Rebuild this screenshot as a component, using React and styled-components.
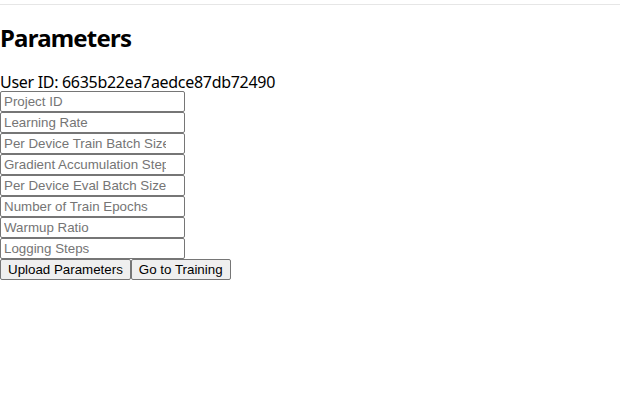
import React from "react";
import styled, { createGlobalStyle } from "styled-components";

const GlobalStyle = createGlobalStyle`
  body {
    margin: 0;
    font-family: "Noto Sans", "Open Sans", sans-serif;
    background: #fff;
    color: #000;
  }
`;

const TopRule = styled.hr`
  margin: 4px 0 0;
  border: none;
  border-top: 1px solid #e6e6e6;
`;

const Title = styled.h2`
  font-size: 24px;
  font-weight: 700;
  letter-spacing: -0.8px;
  margin: 19px 0 21px;
  line-height: 28px;
`;

const UserLine = styled.div`
  font-size: 16px;
  letter-spacing: -0.3px;
  line-height: 18px;
`;

const Field = styled.input`
  display: block;
  box-sizing: border-box;
  width: 185px;
  height: 21px;
  margin: 0;
  padding: 1px 3px;
  font-family: "Liberation Sans", Arial, sans-serif;
  font-size: 13.33px;
  border: 1px solid #767676;
  border-radius: 2px;
  color: #000;
  &::placeholder {
    color: #757575;
  }
`;

const Actions = styled.div`
  display: flex;
`;

const Button = styled.button`
  font-family: "Liberation Sans", Arial, sans-serif;
  font-size: 13.33px;
  height: 21px;
  padding: 1px 7px;
  background: #efefef;
  border: 1px solid #767676;
  border-radius: 2px;
  color: #000;
`;

const fields = [
  ["Project ID", "text"],
  ["Learning Rate", "number"],
  ["Per Device Train Batch Size", "number"],
  ["Gradient Accumulation Steps", "number"],
  ["Per Device Eval Batch Size", "number"],
  ["Number of Train Epochs", "number"],
  ["Warmup Ratio", "number"],
  ["Logging Steps", "number"],
];

export default function App() {
  return (
    <>
      <GlobalStyle />
      <TopRule />
      <Title>Parameters</Title>
      <UserLine>User ID: 6635b22ea7aedce87db72490</UserLine>
      {fields.map(([label, type]) => (
        <Field key={label} type={type} placeholder={label} />
      ))}
      <Actions>
        <Button>Upload Parameters</Button>
        <Button>Go to Training</Button>
      </Actions>
    </>
  );
}
